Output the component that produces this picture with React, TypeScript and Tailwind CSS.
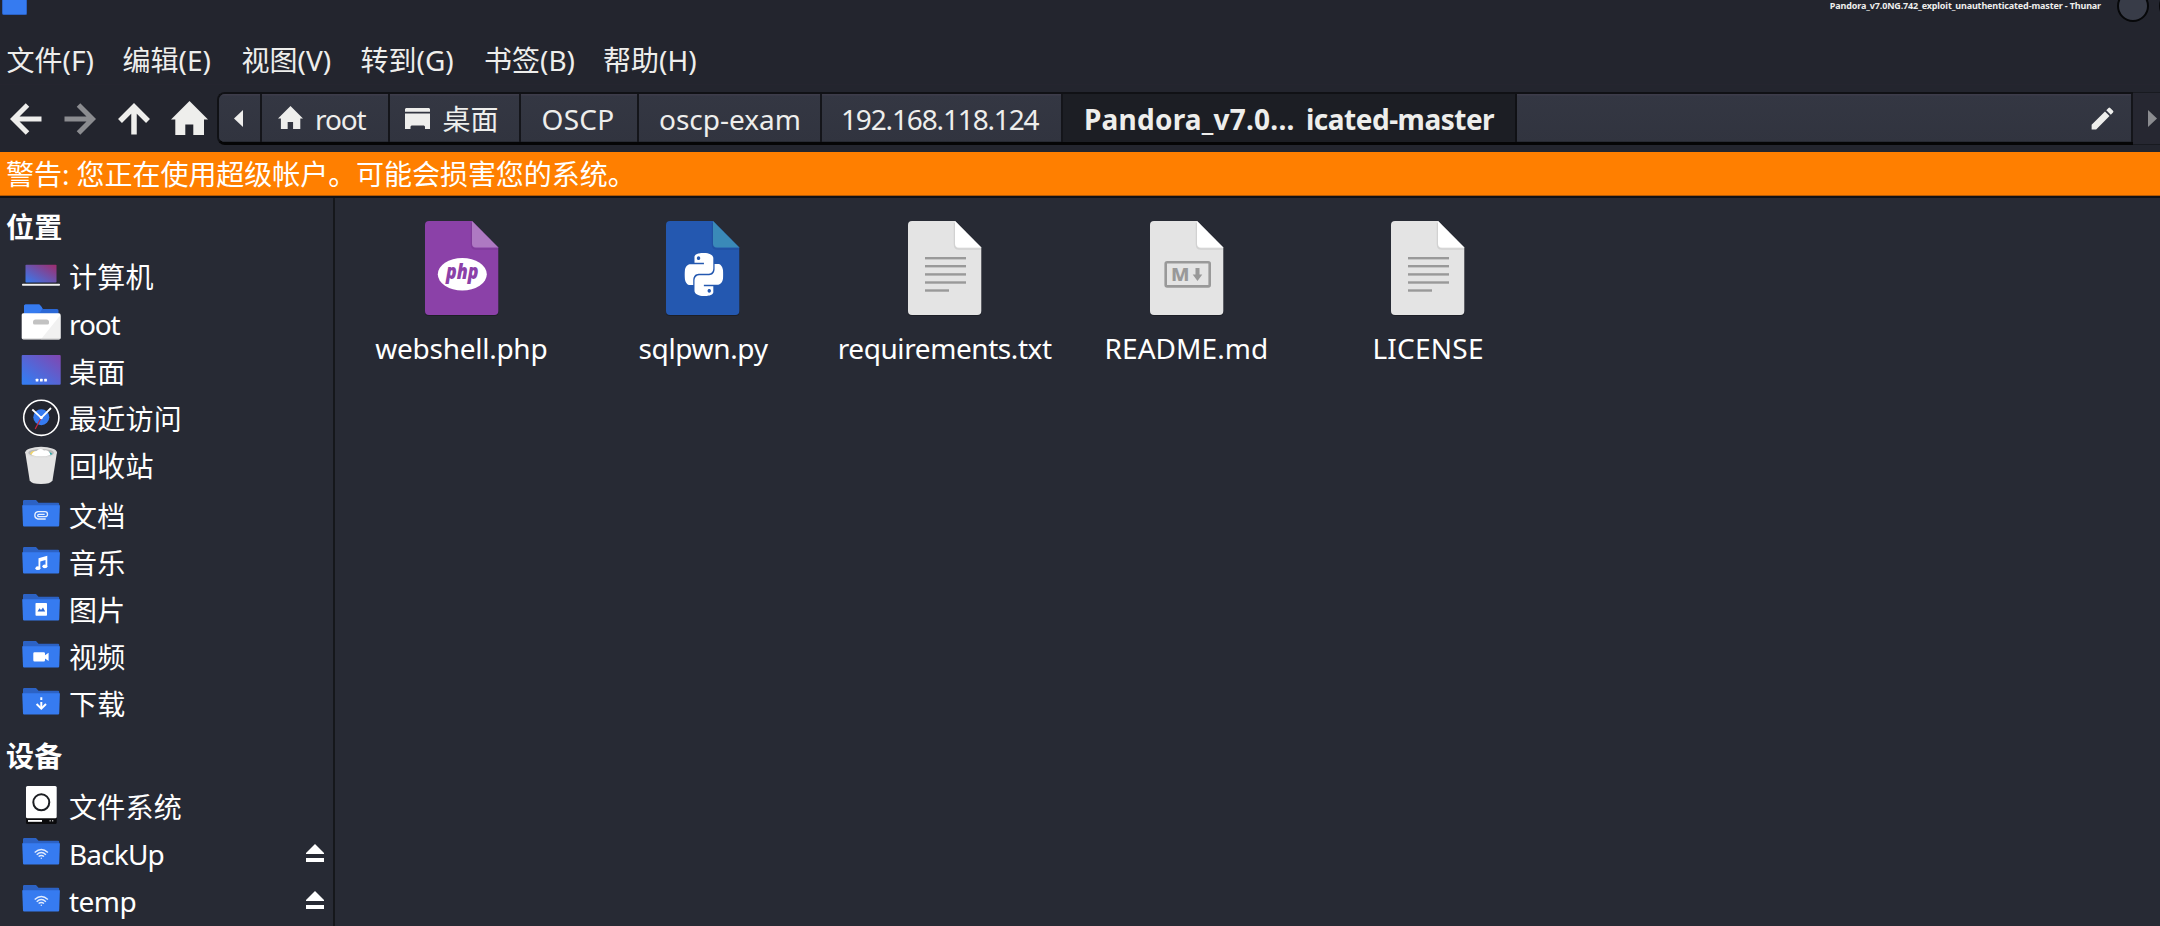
import type { ReactNode } from 'react';
import { SiPython } from 'react-icons/si';
import { MdEdit } from 'react-icons/md';

const menus = [
  { label: '文件(F)', width: 'w-[116px]' },
  { label: '编辑(E)', width: 'w-[119px]' },
  { label: '视图(V)', width: 'w-[119px]' },
  { label: '转到(G)', width: 'w-[123.500px]' },
  { label: '书签(B)', width: 'w-[119px]' },
  { label: '帮助(H)', width: 'w-[119px]' },
];

function FolderIcon({ children }: { children?: ReactNode }) {
  return (
    <svg viewBox="0 0 40 40" className="size-10 shrink-0 overflow-visible">
      <path d="M2 12V5.200Q2 4 3.200 4H15L17.500 6.700H37Q38.200 6.700 38.200 8V12Z" fill="#2c62c4" />
      <path d="M1.200 9.200H38.900L38.200 29.600Q38.100 30.600 37.100 30.600H3.100Q2.100 30.600 2 29.600Z" fill="#367bf0" />
      {children}
    </svg>
  );
}

function ComputerIcon() {
  return (
    <svg viewBox="0 0 40 40" className="size-10 shrink-0">
      <defs>
        <linearGradient id="screen" x1="0" y1="1" x2="1" y2="0">
          <stop offset="0" stopColor="#367bf0" />
          <stop offset="1" stopColor="#a02c6c" />
        </linearGradient>
      </defs>
      <rect x="4.500" y="7.700" width="31" height="18" rx="0.800" fill="url(#screen)" />
      <rect x="3.500" y="25.700" width="33" height="1" fill="#17181d" />
      <rect x="1" y="26.700" width="38" height="2" rx="0.800" fill="#f2f2f2" />
    </svg>
  );
}

function HomeFolderIcon() {
  return (
    <svg viewBox="0 0 40 40" className="size-10 shrink-0">
      <path d="M3 14V2Q3 .5 4.500 .5H18.500L22 5H36Q37.500 5 37.500 6.500V14Z" fill="#2b68d6" />
      <path d="M3 10V2Q3 .5 4.500 .5H18Q19 .5 21.300 4.200Q21.300 5 19 8.500Z" fill="#367bf0" />
      <rect x="0.700" y="9.300" width="38.800" height="26" rx="1.500" fill="#ffffff" />
      <path d="M39.500 11V33.800Q39.500 35.300 38 35.300H20Z" fill="#f1f1f1" />
      <path d="M1 34.600Q1.500 35.400 2.500 35.400H38Q39 35.400 39.300 34.600Z" fill="#c9c9c9" />
      <path d="M12 19V18Q12 15.500 14.500 15.500H25.500Q28 15.500 28 18V19Q28 20.500 26.500 20.500H13.500Q12 20.500 12 19Z" fill="#c2c2c2" />
    </svg>
  );
}

function DesktopIcon() {
  return (
    <svg viewBox="0 0 40 40" className="size-10 shrink-0">
      <defs>
        <linearGradient id="wallpaper" x1="0" y1="1" x2="1" y2="0">
          <stop offset="0.100" stopColor="#367bf0" />
          <stop offset="1" stopColor="#8246b0" />
        </linearGradient>
      </defs>
      <rect x="0.700" y="3" width="39" height="29.700" rx="1" fill="url(#wallpaper)" />
      <rect x="14.700" y="26.800" width="2.700" height="2.700" rx="0.500" fill="#fff" />
      <rect x="19" y="26.800" width="2.700" height="2.700" rx="0.500" fill="#fff" />
      <rect x="23.200" y="26.800" width="2.700" height="2.700" rx="0.500" fill="#fff" />
    </svg>
  );
}

function ClockIcon() {
  return (
    <svg viewBox="0 0 40 40" className="size-10 shrink-0 overflow-visible">
      <circle cx="20.300" cy="18.800" r="17.600" fill="#23252e" stroke="#fff" strokeWidth="1.600" />
      <circle cx="20.300" cy="18.200" r="8" fill="#367bf0" />
      <path d="M20.300 18.500L14.200 30" stroke="#c9283e" strokeWidth="1.200" />
      <path d="M11.300 10.500L20.300 18.800L30 9" fill="none" stroke="#fff" strokeWidth="1.800" />
      <circle cx="20.300" cy="18.600" r="1.600" fill="#fff" />
    </svg>
  );
}

function TrashIcon() {
  return (
    <svg viewBox="0 0 40 40" className="size-10 shrink-0 overflow-visible">
      <path d="M4.200 6L8.700 34.500Q10.500 38 20 38Q29.500 38 31.500 34.500L36 6Z" fill="#e4e4e4" />
      <ellipse cx="20.100" cy="6.300" rx="15.800" ry="5.500" fill="#dedede" />
      <ellipse cx="20.100" cy="6.800" rx="12.800" ry="3.900" fill="#b9b9b9" />
      <path d="M9 8Q10 4.500 14 5V10Z" fill="#f1d66a" />
      <path d="M28 5.500L31.500 8L29 9.300Z" fill="#2aa6a6" />
      <path d="M10.500 9Q12 5 15.500 5Q19 1.500 23 4.500Q28 3.500 29.500 9Q20 12 10.500 9Z" fill="#fff" />
    </svg>
  );
}

function DriveIcon() {
  return (
    <svg viewBox="0 0 40 40" className="size-10 shrink-0 overflow-visible">
      <rect x="5" y="26" width="30.700" height="11" rx="1.500" fill="#0b0b0d" />
      <rect x="5" y="-1" width="30.700" height="32.200" rx="1.500" fill="#fff" />
      <circle cx="20.300" cy="15.300" r="8" fill="none" stroke="#1c1e22" strokeWidth="2" />
      <rect x="7" y="33" width="14" height="1.800" fill="#fff" />
      <rect x="28.500" y="33" width="1.300" height="1.500" fill="#aaa" />
      <rect x="31" y="33" width="1.300" height="1.500" fill="#aaa" />
    </svg>
  );
}

const clip = (
  <path d="M25 23.200H17.200A3.700 3.700 0 0 1 17.200 15.900H24.300A2.500 2.500 0 0 1 24.300 20.900H18.200A1.200 1.200 0 0 1 18.200 18.500H24" transform="translate(-0.300 -0.200)" fill="none" stroke="#e6effd" strokeWidth="1.300" />
);
const note = (
  <g fill="#fff">
    <path d="M17.500 15.200L26.300 12.800V23.300H24.500V17L19.300 18.400V25.300H17.500Z" />
    <ellipse cx="16.900" cy="25.200" rx="2.500" ry="1.900" />
    <ellipse cx="23.900" cy="23.300" rx="2.500" ry="1.900" />
  </g>
);
const photo = (
  <g>
    <rect x="14.500" y="13" width="11.500" height="12.800" rx="0.800" fill="#fff" />
    <path d="M16.500 21.500L18.500 18.300L20 20L22 17.500L24.200 21.500Z" fill="#2f6ad6" />
  </g>
);
const camera = (
  <path d="M13.500 15.200H22.800Q24 15.200 24 16.400V18.300L27.600 15.800V24L24 21.500V23.200Q24 24.400 22.800 24.400H13.500Q12.300 24.400 12.300 23.200V16.400Q12.300 15.200 13.500 15.200Z" fill="#fff" />
);
const download = (
  <g fill="none" stroke="#fff" strokeWidth="2">
    <path d="M15.600 20L20.300 24.600L25 20" />
    <path d="M20.300 18V24M20.300 13.300V15.900" />
  </g>
);
const wifi = (
  <g fill="none" stroke="#e2ecfd" strokeWidth="1.400">
    <path d="M13.700 18.600Q20.300 12.400 26.900 18.600" />
    <path d="M15.700 20.700Q20.300 16.300 24.900 20.700" />
    <path d="M17.600 22.600Q20.300 20.200 23 22.600" />
    <circle cx="20.300" cy="24.200" r="0.700" fill="#e2ecfd" stroke="none" />
  </g>
);

function Place({ icon, label, height, tracking = 'tracking-[0.250px]', eject = false }: { icon: ReactNode; label: string; height: string; tracking?: string; eject?: boolean }) {
  return (
    <li className={`flex items-center pl-[21px] pr-[9px] ${height}`}>
      {icon}
      <span className={`ml-2 flex-1 ${tracking}`}>{label}</span>
      {eject && (
        <svg viewBox="0 0 18 18" className="mb-0.5 size-[18px]" fill="#fff">
          <path d="M9 0L18 9V10H0V9Z" />
          <rect y="14" width="18" height="4" />
        </svg>
      )}
    </li>
  );
}

function FileShape({ fill, fold, children }: { fill: string; fold: string; children: ReactNode }) {
  return (
    <svg viewBox="0 0 73.300 94" className="h-[94px] w-[73.300px] overflow-visible">
      <path d="M4 1H47L73.300 27.300V91.500Q73.300 95 69.300 95H4Q0 95 0 91.500V5Q0 1 4 1Z" fill="#000" opacity="0.250" />
      <path d="M4 0H47L73.300 26.500V90Q73.300 94 69.300 94H4Q0 94 0 90V4Q0 0 4 0Z" fill={fill} />
      <path d="M46.500 2V23.500Q46.500 28 51 28H73" fill="none" stroke="#000" strokeWidth="1.500" opacity="0.080" />
      <path d="M47 0L73.300 26.500H51Q47 26.500 47 22.500Z" fill={fold} />
      {children}
    </svg>
  );
}

const textLines = (
  <g fill="#999">
    <rect x="17" y="36" width="41" height="2.400" />
    <rect x="17" y="44" width="41" height="2.400" />
    <rect x="17" y="52.200" width="41" height="2.400" />
    <rect x="17" y="60.300" width="41" height="2.400" />
    <rect x="17" y="68.300" width="24" height="2.400" />
  </g>
);

const files = [
  {
    name: 'webshell.php',
    tracking: 'tracking-[-0.270px]',
    icon: (
      <FileShape fill="#8b41a8" fold="#ae79c2">
        <ellipse cx="37.300" cy="53.300" rx="24.500" ry="16.300" fill="#fff" />
        <text x="37.300" y="58.500" textAnchor="middle" fontFamily="'Open Sans', 'Noto Sans', sans-serif" fontSize="21.500" fontWeight="800" fontStyle="italic" textLength="32.500" lengthAdjust="spacingAndGlyphs" fill="#8b41a8">php</text>
      </FileShape>
    ),
  },
  {
    name: 'sqlpwn.py',
    tracking: 'tracking-[-0.350px]',
    icon: (
      <FileShape fill="#2458b0" fold="#3a8ab8">
        <SiPython x="18.500" y="32" className="h-[43px] w-[38.800px]" preserveAspectRatio="none" color="#fff" />
      </FileShape>
    ),
  },
  {
    name: 'requirements.txt',
    tracking: 'tracking-[-0.420px]',
    icon: <FileShape fill="#e4e4e4" fold="#ffffff">{textLines}</FileShape>,
  },
  {
    name: 'README.md',
    tracking: 'tracking-[0.050px]',
    icon: (
      <FileShape fill="#e4e4e4" fold="#ffffff">
        <rect x="15.700" y="41.200" width="44" height="24.200" rx="1.500" fill="none" stroke="#999" strokeWidth="2.600" />
        <text x="21" y="60" fontFamily="'Noto Sans', sans-serif" fontSize="18" fontWeight="800" textLength="18.500" lengthAdjust="spacingAndGlyphs" fill="#999">M</text>
        <path d="M45.500 47H49.500V53.500H52.300L47.500 60L42.700 53.500H45.500Z" fill="#999" />
      </FileShape>
    ),
  },
  {
    name: 'LICENSE',
    tracking: 'tracking-[0.250px]',
    icon: <FileShape fill="#e4e4e4" fold="#ffffff">{textLines}</FileShape>,
  },
];

function Crumb({ width, pad, children }: { width: string; pad: string; children: ReactNode }) {
  return (
    <div className={`flex h-full shrink-0 items-center border-r-2 border-[#14151a] bg-linear-to-b from-[#343743] to-[#31343f] shadow-[inset_0_1.500px_0_#3d3c4a,inset_0_-1px_0_#272a33] ${width} ${pad}`}>
      {children}
    </div>
  );
}

function HouseIcon({ className }: { className: string }) {
  return (
    <svg viewBox="0 0 37 34" preserveAspectRatio="none" className={`shrink-0 ${className}`} fill="#eeeeec">
      <path d="M18.500 0L37 18.500H33V34H22.300V23.500H14.300V34H4.300V18.500H0Z" />
    </svg>
  );
}

export default function App() {
  return (
    <div className="flex h-[926px] w-[2160px] flex-col overflow-hidden bg-[#272a34] font-['Noto_Sans','Noto_Sans_CJK_SC',sans-serif] text-[28px] leading-9 whitespace-nowrap text-white">
      <header className="flex h-[33px] shrink-0 items-start justify-between bg-[#23252e] pl-[2px]">
        <div className="h-[15px] w-[25px] rounded-b-[2px] border-x border-b border-[#2c62c4] bg-[#367bf0]" />
        <div className="flex">
          <span className="text-[9px] leading-3 font-bold tracking-[-0.140px] text-[#eeeeec]">
            Pandora_v7.0NG.742_exploit_unauthenticated-master - Thunar
          </span>
          <span className="-mt-[10px] ml-[16px] size-[32px] rounded-full border-2 border-[#07080a] bg-[#383c48]" />
          <span className="-mt-[10px] -mr-[31px] ml-[10px] size-[32px] rounded-full border-2 border-[#07080a] bg-[#383c48]" />
        </div>
      </header>

      <nav className="flex h-[51px] shrink-0 items-center bg-[#23252e] pt-[2px] pl-[6.500px] text-[#eeeeec]">
        {menus.map((m) => (
          <span key={m.label} className={m.width}>{m.label}</span>
        ))}
      </nav>

      <div className="flex h-[68px] shrink-0 items-start border-t border-[#25252f] bg-[#23252e] pt-[7px] text-[#eeeeec]">
        <div className="flex h-[54px] w-[217px] shrink-0 items-center pl-[9.500px]">
          <svg viewBox="0 0 32 32" className="size-8" fill="none" stroke="#eeeeec" strokeWidth="5">
            <path d="M17.500 2L3.500 16L17.500 30M3 16H31.500" />
          </svg>
          <svg viewBox="0 0 32 32" className="ml-[22px] size-8" fill="none" stroke="#8b8c90" strokeWidth="5">
            <path d="M14.500 2L28.500 16L14.500 30M29 16H.5" />
          </svg>
          <svg viewBox="0 0 32 32" className="ml-[22px] size-8" fill="none" stroke="#eeeeec" strokeWidth="5.500">
            <path d="M2 18L16 4L30 18M16 3.500V31.500" />
          </svg>
          <HouseIcon className="mb-[3px] ml-[21.500px] h-[34px] w-[37px]" />
        </div>
        <div className="flex h-[53px] w-[1916px] shrink-0 overflow-hidden rounded-l-[8px] border-t-2 border-b-[3px] border-l-2 border-t-[#101115] border-b-[#050506] border-l-[#101115]">
          <Crumb width="w-[43px]" pad="pl-[15px]">
            <svg viewBox="0 0 9 17" className="h-[17px] w-[9px]" fill="#eeeeec"><path d="M9 0V17L0 8.500Z" /></svg>
          </Crumb>
          <Crumb width="w-[127.500px]" pad="pl-[16px]">
            <HouseIcon className="mb-px h-[23px] w-[25px]" />
            <span className="mt-[2px] ml-[12px] tracking-[-1.100px]">root</span>
          </Crumb>
          <Crumb width="w-[131px]" pad="pl-[15.500px]">
            <svg viewBox="0 0 25 21" className="h-[21px] w-[25px]" fill="#eeeeec">
              <path d="M1 0H24L25 1V3.700H0V1ZM0 5.500H25V21H20V18.500L19 17.500H6.500L5.500 18.500V21H0Z" />
            </svg>
            <span className="mt-[2px] ml-[12.500px]">桌面</span>
          </Crumb>
          <Crumb width="w-[118px]" pad="pl-[21px]"><span className="mt-[2px] tracking-[0.300px]">OSCP</span></Crumb>
          <Crumb width="w-[183.500px]" pad="pl-[20.500px]"><span className="mt-[2px]">oscp-exam</span></Crumb>
          <Crumb width="w-[241px]" pad="pl-[19px]"><span className="mt-[2px] tracking-[-1.150px]">192.168.118.124</span></Crumb>
          <div className="flex h-full w-[454px] shrink-0 items-center border-r-2 border-[#101115] bg-[#1c1e24] pt-[2px] pl-[21px] font-bold">
            <span className="w-[222px] tracking-[0.220px]">Pandora_v7.0...</span>
            <span className="tracking-[-0.500px]">icated-master</span>
          </div>
          <div className="flex h-full flex-1 items-center justify-end border-r-2 border-[#14151a] bg-linear-to-b from-[#343743] to-[#31343f] pr-[14px] shadow-[inset_0_1.500px_0_#3d3c4a,inset_0_-1px_0_#272a33]">
            <MdEdit className="size-[29px]" />
          </div>
        </div>
        <div className="flex h-[53px] flex-1 items-center border-y border-[#181a20] bg-[#262731] pl-[15px]">
          <svg viewBox="0 0 9 17" className="h-[17px] w-[9px]" fill="#8b8c90"><path d="M0 0V17L9 8.500Z" /></svg>
        </div>
      </div>

      <div className="flex h-[44px] shrink-0 items-center border-b border-[#b35a06] bg-[#ff7f00] pt-px pl-[6px] tracking-[-0.050px]">
        警告: 您正在使用超级帐户。可能会损害您的系统。
      </div>

      <main className="flex min-h-0 flex-1 border-t-2 border-[#111216]">
        <aside className="w-[335px] shrink-0 border-r-2 border-[#15171b]">
          <h2 className="flex h-[55.200px] items-center pt-[2px] pl-[6px] font-bold tracking-[0.200px]">位置</h2>
          <ul>
            <Place height="h-[47.400px]" icon={<ComputerIcon />} label="计算机" />
            <Place height="h-[47.400px]" icon={<HomeFolderIcon />} label="root" tracking="tracking-[-1.100px]" />
            <Place height="h-[47.400px]" icon={<DesktopIcon />} label="桌面" />
            <Place height="h-[47.400px]" icon={<ClockIcon />} label="最近访问" />
            <Place height="h-[47.400px]" icon={<TrashIcon />} label="回收站" />
          </ul>
          <ul className="mt-[2px]">
            <Place height="h-[47.200px]" icon={<FolderIcon>{clip}</FolderIcon>} label="文档" />
            <Place height="h-[47.200px]" icon={<FolderIcon>{note}</FolderIcon>} label="音乐" />
            <Place height="h-[47.200px]" icon={<FolderIcon>{photo}</FolderIcon>} label="图片" />
            <Place height="h-[47.200px]" icon={<FolderIcon>{camera}</FolderIcon>} label="视频" />
            <Place height="h-[47.200px]" icon={<FolderIcon>{download}</FolderIcon>} label="下载" />
          </ul>
          <h2 className="flex h-[55.800px] items-center pl-[6px] font-bold tracking-[0.200px]">设备</h2>
          <ul>
            <Place height="h-[47px]" icon={<DriveIcon />} label="文件系统" />
            <Place height="h-[47px]" icon={<FolderIcon>{wifi}</FolderIcon>} label="BackUp" tracking="tracking-[-0.850px]" eject />
            <Place height="h-[47px]" icon={<FolderIcon>{wifi}</FolderIcon>} label="temp" tracking="tracking-[-0.550px]" eject />
          </ul>
        </aside>
        <section className="flex items-start pt-[23px] pl-[5.500px]">
          {files.map((f) => (
            <div key={f.name} className="flex w-[241.700px] flex-col items-center">
              {f.icon}
              <span className={`mt-[15px] ${f.tracking}`}>{f.name}</span>
            </div>
          ))}
        </section>
      </main>
    </div>
  );
}
